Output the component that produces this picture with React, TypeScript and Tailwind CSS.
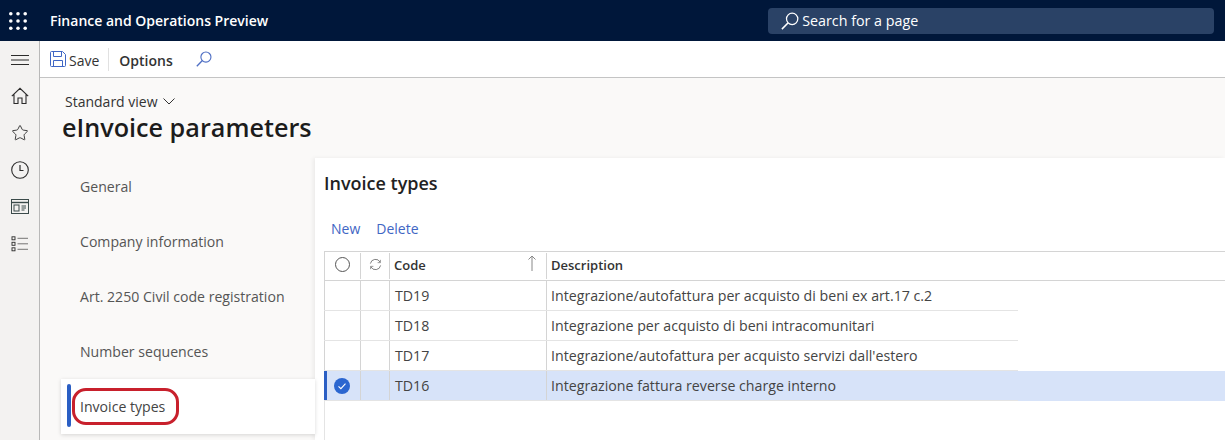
import { Star } from 'lucide-react';

const tabs = ['General', 'Company information', 'Art. 2250 Civil code registration', 'Number sequences'];

const rows = [
  { code: 'TD19', text: 'Integrazione/autofattura per acquisto di beni ex art.17 c.2' },
  { code: 'TD18', text: 'Integrazione per acquisto di beni intracomunitari' },
  { code: 'TD17', text: "Integrazione/autofattura per acquisto servizi dall'estero" },
  { code: 'TD16', text: 'Integrazione fattura reverse charge interno', selected: true },
];

function Search({ className }: { className: string }) {
  return (
    <svg viewBox="0 0 20 20" fill="none" stroke="currentColor" strokeWidth="1.4" className={className}>
      <circle cx="12.4" cy="7.600" r="6.300" />
      <path d="M8 12 1 19" strokeWidth="1.700" />
    </svg>
  );
}

function Waffle() {
  return (
    <svg viewBox="0 0 18 18" fill="white" className="h-[18px] w-[18px]">
      {[1.8, 9, 16.2].map((y) =>
        [1.8, 9, 16.2].map((x) => <circle key={`${x}-${y}`} cx={x} cy={y} r="1.800" />),
      )}
    </svg>
  );
}

function Rail() {
  return (
    <div className="flex w-10 shrink-0 flex-col items-center border-r border-[#b8b8b8] bg-[#f3f2f1] pt-[14px] text-[#2b2b2b]">
      <svg viewBox="0 0 18 10" fill="none" stroke="currentColor" className="h-[10px] w-[18px]">
        <path d="M0 .5h18M0 5h18M0 9.500h18" />
      </svg>
      <svg viewBox="0 0 18 18" fill="none" stroke="currentColor" className="mt-[22px] h-[18px] w-[18px]">
        <path d="M.8 9.200 9 1.300l8.200 7.900M3 7.500v9h4v-5.500h4v5.500h4v-9" strokeWidth="1.100" />
      </svg>
      <Star size={18} strokeWidth={1.2} className="mt-[19px]" />
      <svg viewBox="0 0 18 18" fill="none" stroke="currentColor" className="mt-[19px] h-[18px] w-[18px]">
        <circle cx="9" cy="9" r="8.300" strokeWidth="1.100" />
        <path d="M9 4v5.500h3.500" strokeWidth="1.200" />
      </svg>
      <svg viewBox="0 0 18 16" fill="none" stroke="#3a4a4a" className="mt-[20px] h-4 w-[18px]">
        <rect x=".5" y=".5" width="17" height="14" />
        <path d="M.5 3.500h17" strokeWidth="1.400" />
        <rect x="3" y="6" width="5" height="6" />
        <path d="M10.500 7h4.500M10.500 9h4.500M10.500 11h3" />
      </svg>
      <svg viewBox="0 0 18 16" fill="none" stroke="currentColor" strokeWidth=".9" className="mt-[21px] h-4 w-[18px]">
        <rect x="1" y=".8" width="3" height="3" />
        <rect x="1" y="6.300" width="3" height="3" />
        <rect x="1" y="11.800" width="3" height="3" />
        <path d="M6.500 2.300h10.500M6.500 7.800h10.500M6.500 13.300h10.500" stroke="#666" />
      </svg>
    </div>
  );
}

function InvoiceTable() {
  return (
    <div className="mt-[11px] text-[14.200px] text-[#444]">
      <div className="flex h-[30px] border-y border-[#d4d4d4] text-[13px] font-semibold text-[#333]">
        <div className="flex w-[36px] items-center justify-center border-l border-[#d4d4d4]">
          <div className="mb-[3px] h-[15px] w-[15px] rounded-full border border-[#555]" />
        </div>
        <div className="my-[1px] flex w-[29px] items-center justify-center border-l border-[#d4d4d4] text-[#777]">
          <svg viewBox="0 0 14 14" fill="none" stroke="currentColor" className="mb-[3px] h-[13px] w-[13px]">
            <path d="M1.500 6A5.600 5.600 0 0 1 12 4.500M12.500 8A5.600 5.600 0 0 1 2 9.500" />
            <path d="M12.300 2v3h-3M1.700 12V9h3" strokeWidth=".8" />
          </svg>
        </div>
        <div className="my-[1px] flex w-[157px] items-center justify-between border-l border-[#d4d4d4] pl-1 pr-[9px]">
          <span>Code</span>
          <svg viewBox="0 0 10 16" fill="none" stroke="#888" className="mb-[6px] h-4 w-[10px]">
            <path d="M5 16V1M1.500 4.500 5 1l3.500 3.500" />
          </svg>
        </div>
        <div className="my-[1px] flex flex-1 items-center border-l border-[#d4d4d4] pl-1">Description</div>
      </div>
      {rows.map((row) => (
        <div key={row.code} className={`flex h-[30px] ${row.selected ? 'bg-[#d7e3f9]' : ''}`}>
          <div className="flex w-[694px] border-b border-[#e4e4e4]">
            <div
              className={`flex w-[36px] items-center justify-center ${
                row.selected ? 'border-l-[3px] border-[#2b5fc4] pr-[3px]' : 'border-l border-[#d4d4d4]'
              }`}
            >
              {row.selected && (
                <svg viewBox="0 0 16 16" className="h-4 w-4">
                  <circle cx="8" cy="8" r="8" fill="#2b66d0" />
                  <path d="m4.500 8.300 2.400 2.400 4.600-5" fill="none" stroke="white" strokeWidth="1.100" />
                </svg>
              )}
            </div>
            <div className="w-[29px] border-l border-[#d4d4d4]" />
            <div className="flex w-[157px] items-center border-l border-[#d4d4d4] pl-[5px]">{row.code}</div>
            <div className="flex flex-1 items-center border-l border-[#d4d4d4] pl-[4px]">{row.text}</div>
          </div>
        </div>
      ))}
      <div className="h-[39px] border-l border-[#e4e4e4]" />
    </div>
  );
}

export default function App() {
  return (
    <div className="flex h-[440px] w-[1225px] flex-col overflow-hidden bg-white font-['Open_Sans','Liberation_Sans',sans-serif]">
      <header className="flex h-[41px] shrink-0 items-center bg-[#00173a] pl-[9px] text-white">
        <Waffle />
        <span className="ml-[23px] text-[14px] font-semibold">Finance and Operations Preview</span>
        <div className="ml-[500px] flex h-[26px] w-[446px] items-center rounded-sm bg-[#2a4266] pl-[13px] text-[14.300px]">
          <Search className="h-[18px] w-[18px]" />
          <span className="ml-[3px]">Search for a page</span>
        </div>
      </header>
      <div className="flex min-h-0 flex-1">
        <Rail />
        <main className="flex min-w-0 flex-1 flex-col bg-[#faf9f8]">
          <div className="flex h-[37px] shrink-0 items-center border-b border-[#c4c4c4] bg-white pl-[10px] pt-[2px] text-[14px] text-[#333]">
            <svg viewBox="0 0 16 16" fill="none" stroke="#3f66c4" className="mb-[2px] h-4 w-4">
              <path d="M.5 1.500a1 1 0 0 1 1-1h11l3 3v11a1 1 0 0 1-1 1h-13a1 1 0 0 1-1-1z" />
              <path d="M3.500 .5v5h8v-5M3.500 15.500v-6h9v6" />
            </svg>
            <span className="ml-[3px]">Save</span>
            <div className="mb-[2px] ml-[9px] h-[23px] w-px bg-[#e1e1e1]" />
            <span className="ml-[10px] font-semibold text-[#333]">Options</span>
            <Search className="mb-[2px] ml-[23px] h-4 w-4 text-[#4f6fc4]" />
          </div>
          <div className="pl-[22px] pt-[14px]">
            <div className="ml-[3px] flex items-center text-[14px] leading-[19px] text-[#333]">
              Standard view
              <svg viewBox="0 0 12 7" fill="none" stroke="currentColor" className="ml-[5px] h-[7px] w-3">
                <path d="m.5.500 5.500 5.500 5.500-5.500" />
              </svg>
            </div>
            <h1 className="text-[25.200px] font-semibold leading-[32px] text-[#1c1c1c]">eInvoice parameters</h1>
          </div>
          <div className="mt-[15px] flex min-h-0 flex-1">
            <nav className="w-[275px] shrink-0 pl-[21px] pt-[1px] text-[14.100px] text-[#555]">
              {tabs.map((tab) => (
                <div key={tab} className="flex h-[55px] items-center pl-[19px]">
                  {tab}
                </div>
              ))}
              <div className="relative z-10 flex h-[55px] items-center bg-white pl-[19px] shadow-[0_1px_4px_rgba(0,0,0,0.15)]">
                <div className="absolute bottom-[7px] left-[6px] top-[5px] w-1 rounded-sm bg-[#2b5fc4]" />
                <span className="text-[#444]">Invoice types</span>
                <div className="absolute left-[11px] top-[9px] h-[37px] w-[107px] rounded-[14px] border-[3px] border-[#c8202c]" />
              </div>
            </nav>
            <section className="min-w-0 flex-1 bg-white pl-[9px] pt-[12px] shadow-[-2px_0_4px_rgba(0,0,0,0.06)]">
              <h2 className="text-[18px] font-semibold leading-[26px] text-[#222]">Invoice types</h2>
              <div className="mt-[22px] flex gap-[16px] pl-[7px] text-[14px] leading-[22px] text-[#3f66c4]">
                <span>New</span>
                <span>Delete</span>
              </div>
              <InvoiceTable />
            </section>
          </div>
        </main>
      </div>
    </div>
  );
}
